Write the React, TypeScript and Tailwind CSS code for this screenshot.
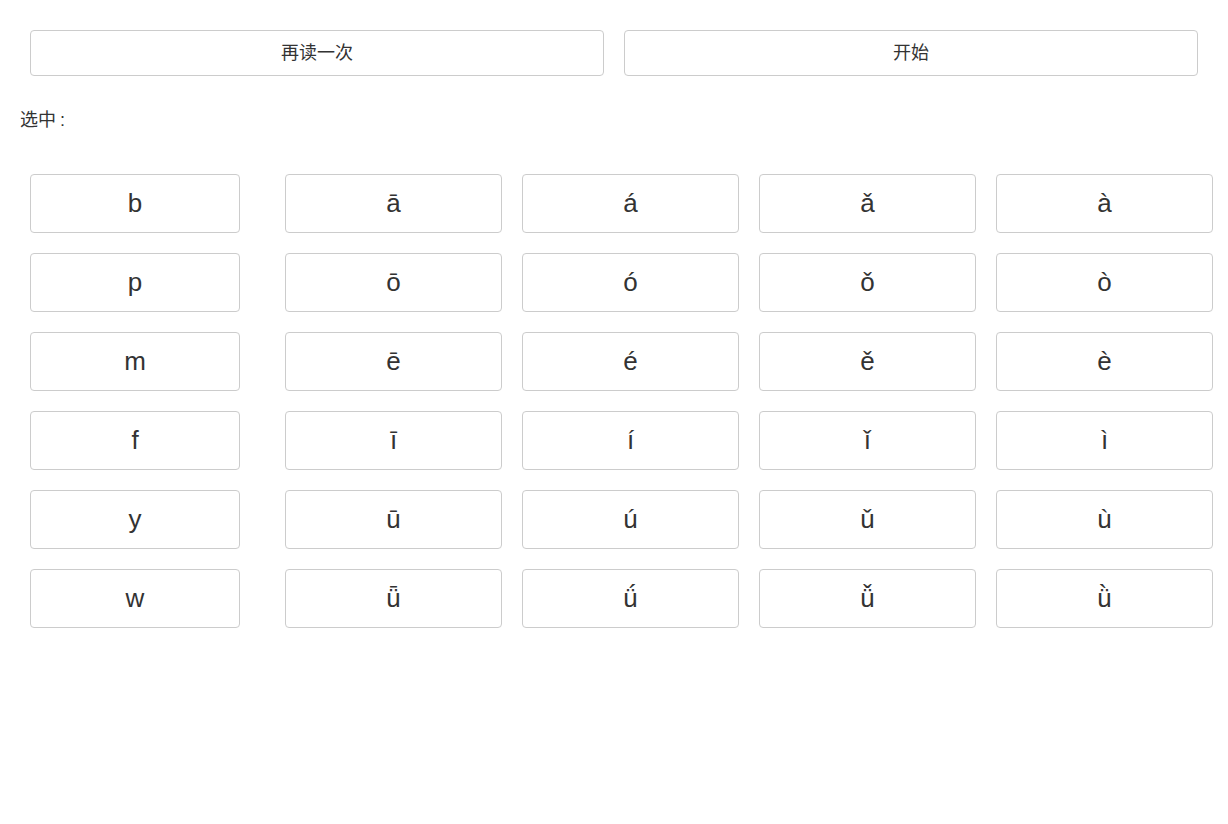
const initials = ["b", "p", "m", "f", "y", "w"];

const finals = [
  ["ā", "á", "ǎ", "à"],
  ["ō", "ó", "ǒ", "ò"],
  ["ē", "é", "ě", "è"],
  ["ī", "í", "ǐ", "ì"],
  ["ū", "ú", "ǔ", "ù"],
  ["ǖ", "ǘ", "ǚ", "ǜ"],
];

const font = "font-['Liberation_Sans','Noto_Sans_CJK_SC',sans-serif]";

function Key({ label, wide }: { label: string; wide?: boolean }) {
  return (
    <button
      className={`${wide ? "w-[210px]" : "w-[217px]"} flex h-[59px] items-center justify-center rounded-[4px] border border-[#cccccc] bg-white text-[26px] text-[#333333]`}
    >
      {label}
    </button>
  );
}

export default function App() {
  return (
    <div className={`${font} min-h-[824px] w-[1228px] bg-white text-[#333333]`}>
      <div className="flex gap-[20px] pl-[30px] pt-[30px]">
        <button className="h-[46px] w-[574px] rounded-[4px] border border-[#cccccc] bg-white text-[18px] text-[#333333]">
          再读一次
        </button>
        <button className="h-[46px] w-[574px] rounded-[4px] border border-[#cccccc] bg-white text-[18px] text-[#333333]">
          开始
        </button>
      </div>

      <div className="mt-[34px] h-[20px] pl-[20px] text-[18px] leading-[20px]">
        选中<span className="ml-[4px]">:</span>
      </div>

      <div className="mt-[44px] flex flex-col gap-[20px] pl-[30px]">
        {initials.map((ini, i) => (
          <div key={ini} className="flex">
            <Key label={ini} wide />
            <div className="ml-[45px] flex gap-[20px]">
              {finals[i].map((f) => (
                <Key key={f} label={f} />
              ))}
            </div>
          </div>
        ))}
      </div>
    </div>
  );
}
